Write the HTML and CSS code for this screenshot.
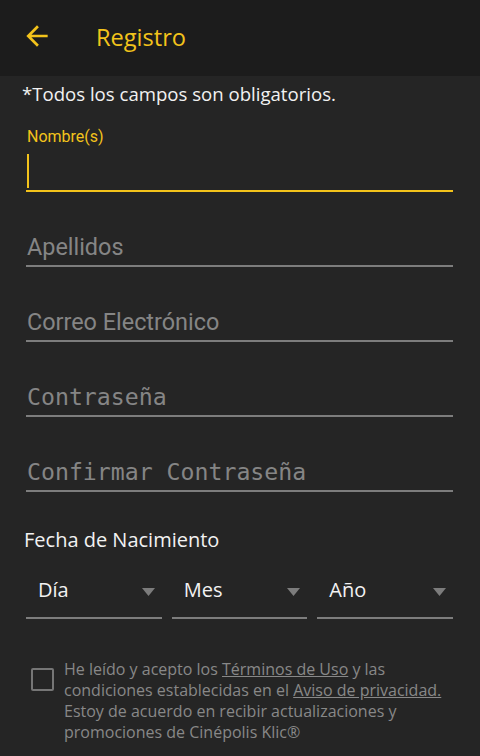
FILE: index.html
```html
<!DOCTYPE html>
<html>
	<head>
		<meta charset="utf-8">
		<meta name="viewport" content="width=device-width, initial-scale=1">
		<title>Registro</title>
		<link rel="stylesheet" href="styles.css">
	</head>
	<body>
		<!--Barra superior-->
		<div class="toolbar">
			<svg class="back" viewBox="0 0 24 24" width="32" height="32"><path d="M20 11H7.83l5.59-5.59L12 4l-8 8 8 8 1.41-1.41L7.83 13H20v-2z" fill="#f3c31b"/></svg>
			<div class="title">Registro</div>
		</div>

		<div class="content">
			<div class="note">*Todos los campos son obligatorios.</div>

			<!--Campo activo-->
			<div class="field active">
				<div class="label">Nombre(s)</div>
				<div class="value"><span class="caret"></span></div>
			</div>

			<div class="field"><span class="hint">Apellidos</span></div>
			<div class="field"><span class="hint">Correo Electrónico</span></div>
			<div class="field"><span class="hint mono">Contraseña</span></div>
			<div class="field"><span class="hint mono">Confirmar Contraseña</span></div>

			<!--Fecha de nacimiento-->
			<div class="birth">Fecha de Nacimiento</div>
			<div class="selects">
				<div class="select"><span>Día</span><svg viewBox="0 0 13 8" width="13" height="8"><path d="M0 0h13L6.5 8z" fill="#7c7c7c"/></svg></div>
				<div class="select"><span>Mes</span><svg viewBox="0 0 13 8" width="13" height="8"><path d="M0 0h13L6.5 8z" fill="#7c7c7c"/></svg></div>
				<div class="select"><span>Año</span><svg viewBox="0 0 13 8" width="13" height="8"><path d="M0 0h13L6.5 8z" fill="#7c7c7c"/></svg></div>
			</div>

			<!--Terminos-->
			<div class="terms">
				<div class="check"></div>
				<p>He leído y acepto los <u>Términos de Uso</u> y las condiciones establecidas en el <u>Aviso de privacidad.</u> Estoy de acuerdo en recibir actualizaciones y promociones de Cinépolis Klic®</p>
			</div>
		</div>
	</body>
</html>
```
FILE: styles.css
```css
body {
	margin: 0;
	background: #252525;
	font-family: "Open Sans", "Noto Sans", sans-serif;
	color: #f2f2f2;
}
/* Barra superior */
.toolbar {
	height: 76px;
	background: #1c1c1c;
	display: flex;
	align-items: center;
	padding-left: 21px;
}
.back {
	display: block;
	margin-top: -4px;
}
.title {
	margin-left: 43px;
	font-size: 23.6px;
	color: #f3c31b;
	margin-top: -2px;
}
/* Contenido */
.content {
	padding: 0 27px 0 26px;
}
.note {
	margin: 6px 0 0 -4px;
	font-size: 18.6px;
	line-height: 24px;
}
.field {
	margin-top: 39px;
	border-bottom: 2px solid #7d7d7d;
	font-family: Roboto, sans-serif;
}
.field.active {
	margin-top: 21px;
	border-bottom-color: #f3c31b;
}
.label {
	font-size: 16px;
	line-height: 20px;
	color: #f3c31b;
	padding-left: 1px;
}
.value {
	height: 36px;
	padding: 7px 0 0 1px;
}
.caret {
	display: block;
	width: 2px;
	height: 34px;
	background: #f3c31b;
}
.hint {
	display: block;
	font-size: 23.4px;
	line-height: 32px;
	padding: 0 0 2px 1px;
	color: #858585;
}
.mono {
	font-family: "DejaVu Sans Mono", monospace;
	font-size: 23.2px;
}
/* Fecha */
.birth {
	margin: 35px 0 0 -2px;
	font-size: 20px;
	line-height: 26px;
}
.selects {
	margin-top: 18px;
	display: grid;
	grid-template-columns: 1fr 1fr 1fr;
	gap: 10px;
}
.select {
	display: flex;
	justify-content: space-between;
	padding: 6px 7px 14px 12px;
	border-bottom: 2px solid #7d7d7d;
	font-size: 20px;
	line-height: 26px;
}
.select svg {
	margin-top: 11px;
}
/* Terminos */
.terms {
	margin-top: 40px;
	display: flex;
	align-items: flex-start;
	padding-left: 5px;
	gap: 10px;
}
.check {
	flex: none;
	width: 19px;
	height: 19px;
	border: 2px solid #767676;
	border-radius: 2px;
	margin-top: 9px;
}
.terms p {
	margin: 0;
	font-size: 16px;
	line-height: 21px;
	color: #888888;
}
```
